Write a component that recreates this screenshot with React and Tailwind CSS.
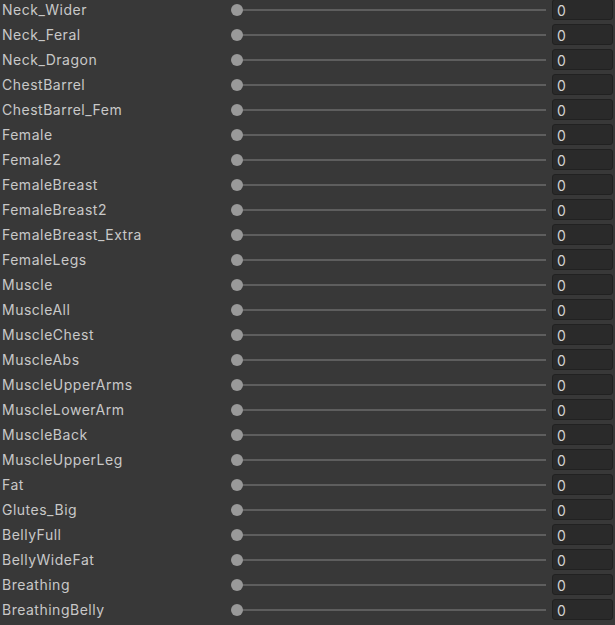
import React from "react";

const labels = [
  "Neck_Wider",
  "Neck_Feral",
  "Neck_Dragon",
  "ChestBarrel",
  "ChestBarrel_Fem",
  "Female",
  "Female2",
  "FemaleBreast",
  "FemaleBreast2",
  "FemaleBreast_Extra",
  "FemaleLegs",
  "Muscle",
  "MuscleAll",
  "MuscleChest",
  "MuscleAbs",
  "MuscleUpperArms",
  "MuscleLowerArm",
  "MuscleBack",
  "MuscleUpperLeg",
  "Fat",
  "Glutes_Big",
  "BellyFull",
  "BellyWideFat",
  "Breathing",
  "BreathingBelly",
];

function Row({ label }) {
  return (
    <div className="flex h-[25px] items-center">
      <div className="w-[231px] shrink-0 pl-[2px] pt-[1px] text-[14px] leading-none tracking-[0.5px] text-[#c8c8c8]">
        {label}
      </div>
      <div className="relative flex h-full w-[315px] shrink-0 items-center">
        <div className="ml-[6px] h-[2px] flex-1 bg-[#5e5e5e]" />
        <div className="absolute left-0 top-1/2 h-[12px] w-[12px] -translate-y-1/2 rounded-full bg-[#999999]" />
      </div>
      <div className="ml-[6px] flex h-[21px] w-[61px] shrink-0 items-center rounded-[3px] border border-[#212121] bg-[#2a2a2a] pl-[4px] pt-[2px] text-[14px] leading-none text-[#d2d2d2]">
        0
      </div>
    </div>
  );
}

export default function App() {
  return (
    <div
      className="h-[625px] w-[615px] overflow-hidden bg-[#383838]"
      style={{ fontFamily: "Inter, 'Noto Sans', sans-serif" }}
    >
      <div className="-mt-[3px] flex flex-col">
        {labels.map((l) => (
          <Row key={l} label={l} />
        ))}
      </div>
    </div>
  );
}
